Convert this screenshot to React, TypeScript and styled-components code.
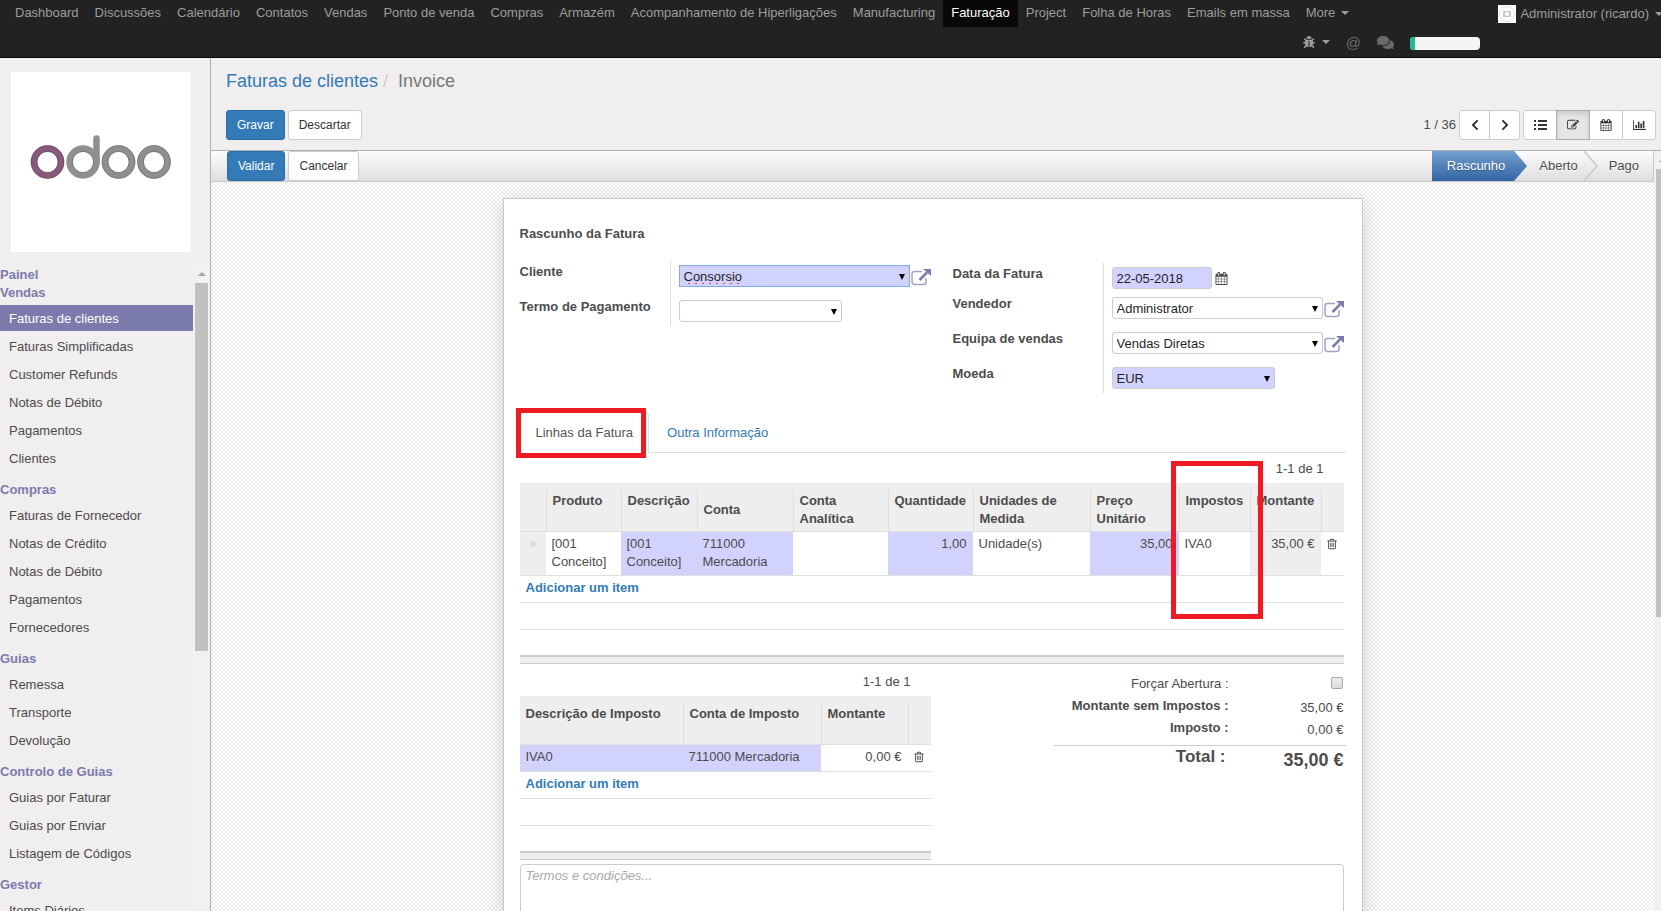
import React from "react";
import styled, { createGlobalStyle, css } from "styled-components";
import { FaBug, FaComments, FaChevronLeft, FaChevronRight } from "react-icons/fa";

const GlobalStyle = createGlobalStyle`
  *, *::before, *::after { box-sizing: border-box; }
  body {
    margin: 0;
    overflow: hidden;
    background: #f0eeee;
    color: #4c4c4c;
    font-family: "Liberation Sans", Arial, sans-serif;
    font-size: 13px;
    line-height: 18px;
  }
  a { text-decoration: none; }
  button, input, select, textarea { font-family: inherit; margin: 0; }
`;

/* ---------- icons ---------- */

const TRASH =
  "M704 736v576q0 14-9 23t-23 9h-64q-14 0-23-9t-9-23v-576q0-14 9-23t23-9h64q14 0 23 9t9 23zm256 0v576q0 14-9 23t-23 9h-64q-14 0-23-9t-9-23v-576q0-14 9-23t23-9h64q14 0 23 9t9 23zm256 0v576q0 14-9 23t-23 9h-64q-14 0-23-9t-9-23v-576q0-14 9-23t23-9h64q14 0 23 9t9 23zm128 724v-948h-896v948q0 22 7 40.5t14.5 27 10.5 8.5h832q3 0 10.5-8.5t14.5-27 7-40.5zm-672-1076h448l-48-117q-7-9-17-11h-317q-10 2-17 11zm928 32v64q0 14-9 23t-23 9h-96v948q0 83-47 143.5t-113 60.5h-832q-66 0-113-58.5t-47-141.5v-952h-96q-14 0-23-9t-9-23v-64q0-14 9-23t23-9h309l70-167q15-37 54-63t79-26h320q40 0 79 26t54 63l70 167h309q14 0 23 9t9 23z";
const CALENDAR =
  "M192 1664h288v-288h-288v288zm352 0h320v-288h-320v288zm-352-352h288v-320h-288v320zm352 0h320v-320h-320v320zm-352-384h288v-288h-288v288zm736 736h320v-288h-320v288zm-384-736h320v-288h-320v288zm768 736h288v-288h-288v288zm-384-352h320v-320h-320v320zm-352-864v-288q0-13-9.5-22.5t-22.5-9.5h-64q-13 0-22.5 9.5t-9.5 22.5v288q0 13 9.5 22.5t22.5 9.5h64q13 0 22.5-9.5t9.5-22.5zm736 864h288v-320h-288v320zm-384-384h320v-288h-320v288zm384 0h288v-288h-288v288zm32-480v-288q0-13-9.5-22.5t-22.5-9.5h-64q-13 0-22.5 9.5t-9.5 22.5v288q0 13 9.5 22.5t22.5 9.5h64q13 0 22.5-9.5t9.5-22.5zm384-64v1280q0 52-38 90t-90 38h-1408q-52 0-90-38t-38-90v-1280q0-52 38-90t90-38h128v-96q0-66 47-113t113-47h64q66 0 113 47t47 113v96h384v-96q0-66 47-113t113-47h64q66 0 113 47t47 113v96h128q52 0 90 38t38 90z";
const EDIT =
  "M888 1184l116-116-152-152-116 116v56h96v96h56zm440-720q-16-16-33 1l-350 350q-17 17-1 33t33-1l350-350q17-17 1-33zm80 594v190q0 119-84.5 203.5t-203.5 84.5h-832q-119 0-203.5-84.5t-84.5-203.5v-832q0-119 84.5-203.5t203.5-84.5h832q63 0 117 25 15 7 18 23 3 17-9 29l-49 49q-14 14-32 8-23-6-45-6h-832q-66 0-113 47t-47 113v832q0 66 47 113t113 47h832q66 0 113-47t47-113v-126q0-13 9-22l64-64q15-15 35-7t20 29zm-96-738l288 288-672 672h-288v-288zm444 132l-92 92-288-288 92-92q28-28 68-28t68 28l152 152q28 28 28 68t-28 68z";
const CHART =
  "M640 896v512h-256v-512h256zm384-512v1024h-256v-1024h256zm1024 1152v128h-2048v-1536h128v1408h1920zm-640-896v768h-256v-768h256zm384-384v1152h-256v-1152h256z";

const Glyph = ({ d, size, wide }: { d: string; size: number; wide?: boolean }) => (
  <svg
    width={wide ? size + 1 : size}
    height={size}
    viewBox={wide ? "0 0 2048 1792" : "0 0 1792 1792"}
    fill="currentColor"
    aria-hidden="true"
  >
    <path d={d} />
  </svg>
);

const ListIcon = () => (
  <svg width="13" height="12" viewBox="0 0 13 12" fill="currentColor" aria-hidden="true">
    <path d="M0 1h2v2H0zM4 1h9v2H4zM0 5h2v2H0zM4 5h9v2H4zM0 9h2v2H0zM4 9h9v2H4z" />
  </svg>
);

const OpenIcon = () => (
  <svg width="20" height="18" viewBox="0 0 20 18" fill="none" aria-hidden="true">
    <path
      d="M11 3.5H3.5a2.5 2.5 0 0 0-2.5 2.5v8a2.5 2.5 0 0 0 2.5 2.5h9a2.5 2.5 0 0 0 2.5-2.5v-4"
      stroke="#a3a2c6"
      strokeWidth="1.5"
    />
    <path d="M8.500 12L16 4.500" stroke="#7c7bad" strokeWidth="2.500" />
    <path d="M12 1h8v7z" fill="#7c7bad" />
  </svg>
);

const OdooLogo = () => (
  <svg width="180" height="180" viewBox="0 0 180 180" fill="none" role="img" aria-label="odoo">
    <g strokeWidth="6.5">
      <circle cx="36.5" cy="90" r="13.5" stroke="#875a7b" />
      <g stroke="#8f8f8f">
        <circle cx="72" cy="90" r="13.5" />
        <path d="M85.5 90V66.5" strokeLinecap="round" />
        <circle cx="107.5" cy="90" r="13.5" />
        <circle cx="143" cy="90" r="13.5" />
      </g>
    </g>
    <g strokeWidth="1" stroke="#000" opacity=".22">
      <circle cx="36.5" cy="90" r="16.5" />
      <circle cx="36.5" cy="90" r="10.5" />
      <circle cx="72" cy="90" r="10.5" />
      <circle cx="107.5" cy="90" r="16.5" />
      <circle cx="107.5" cy="90" r="10.5" />
      <circle cx="143" cy="90" r="16.5" />
      <circle cx="143" cy="90" r="10.5" />
    </g>
  </svg>
);

const Caret = styled.span`
  display: inline-block;
  border: 4px solid transparent;
  border-top-color: currentColor;
  border-bottom: 0;
`;

/* ---------- top bar ---------- */

const Page = styled.div`
  height: 100vh;
  display: flex;
  flex-direction: column;
`;

const NavBar = styled.header`
  background: #222;
  border-bottom: 1px solid #080808;
  color: #9d9d9d;
`;

const NavRow = styled.div`
  display: flex;
  height: 27px;
  padding-left: 7px;
`;

const NavLink = styled.a<{ $active?: boolean }>`
  display: flex;
  align-items: center;
  gap: 6px;
  padding: 0 8px 2px;
  white-space: nowrap;
  color: ${(p) => (p.$active ? "#fff" : "#9d9d9d")};
  background: ${(p) => (p.$active ? "#080808" : "transparent")};
`;

const UserButton = styled.button`
  display: flex;
  flex: none;
  align-items: center;
  gap: 4px;
  margin-left: auto;
  padding: 0;
  border: 0;
  background: none;
  color: #9d9d9d;
  font-size: 13px;
  white-space: nowrap;
  ${Caret} { margin: 0 -2px 0 2px; }
`;

const Tray = styled.div`
  display: flex;
  align-items: center;
  justify-content: flex-end;
  height: 30px;
  padding-right: 181px;
`;

const TrayButton = styled.button<{ $dim?: boolean }>`
  display: flex;
  align-items: center;
  gap: 7px;
  height: 20px;
  margin-right: 16px;
  padding: 0;
  border: 0;
  background: none;
  color: ${(p) => (p.$dim ? "#6a6a6a" : "#9d9d9d")};
  font-size: 15px;
`;

const Planner = styled.div`
  width: 70px;
  height: 13px;
  margin-top: 3px;
  overflow: hidden;
  border-radius: 4px;
  background: #f5f5f5;
`;

const PlannerBar = styled.div`
  width: 5px;
  height: 100%;
  background: #21b799;
`;

/* ---------- left menu ---------- */

const Body = styled.div`
  flex: 1;
  min-height: 0;
  display: flex;
`;

const Side = styled.aside`
  flex: none;
  width: 211px;
  display: flex;
  flex-direction: column;
  border-right: 1px solid #afafb6;
`;

const LogoLink = styled.a`
  flex: none;
  width: 180px;
  height: 180px;
  margin: 14px 0 13px 11px;
  background: #fff;
`;

const MenuArea = styled.div`
  flex: 1;
  min-height: 0;
  display: flex;
`;

const Menu = styled.nav`
  flex: 1;
  overflow: hidden;
`;

const MenuTitle = styled.h2`
  margin: 0;
  padding-top: 2px;
  color: #7c7bad;
  font-size: 13px;
  line-height: 16px;
`;

const MenuList = styled.ul`
  display: flex;
  flex-direction: column;
  gap: 2px;
  margin: 0;
  padding: 4px 0 9px;
  list-style: none;
`;

const MenuItem = styled.a<{ $active?: boolean }>`
  display: block;
  padding: 5px 9px 3px;
  color: ${(p) => (p.$active ? "#fff" : "#4c4c4c")};
  background: ${(p) => (p.$active ? "#7c7bad" : "transparent")};
`;

const ScrollTrack = styled.div<{ $narrow?: boolean }>`
  flex: none;
  display: flex;
  flex-direction: column;
  width: ${(p) => (p.$narrow ? 7 : 17)}px;
  overflow: hidden;
  background: #f1f1f1;
`;

const ScrollArrow = styled.div`
  display: flex;
  align-items: center;
  height: 18px;
  padding-left: 5px;
  color: #a3a3a3;
  ${Caret} { transform: rotate(180deg); }
`;

const ScrollThumb = styled.div<{ $share: number }>`
  height: ${(p) => p.$share}%;
  margin: 0 2px;
  background: #c1c1c1;
  width: 13px;
`;

/* ---------- control panel ---------- */

const Main = styled.main`
  flex: 1;
  min-width: 0;
  display: flex;
  flex-direction: column;
`;

const ControlPanel = styled.div`
  height: 93px;
  padding: 14px 5px 0 15px;
  border-bottom: 1px solid #afafb6;
`;

const Breadcrumb = styled.nav`
  display: flex;
  gap: 5px;
  height: 38px;
  font-size: 18px;
  color: #777;
  a { color: #337ab7; }
  i { color: #ccc; font-style: normal; padding-right: 5px; }
`;

const ControlRow = styled.div`
  display: flex;
  align-items: center;
  gap: 3px;
`;

const Button = styled.button<{ $primary?: boolean }>`
  height: 30px;
  padding: 0 10px;
  border: 1px solid ${(p) => (p.$primary ? "#2e6da4" : "#ccc")};
  border-radius: 3px;
  background: ${(p) => (p.$primary ? "#337ab7" : "#fff")};
  color: ${(p) => (p.$primary ? "#fff" : "#333")};
  font-size: 12px;
`;

const PagerText = styled.span`
  margin-left: auto;
`;

const ButtonGroup = styled.div`
  display: flex;
  button + button { margin-left: -1px; }
  button:not(:first-child) { border-top-left-radius: 0; border-bottom-left-radius: 0; }
  button:not(:last-child) { border-top-right-radius: 0; border-bottom-right-radius: 0; }
`;

const IconButton = styled.button<{ $w: number; $pressed?: boolean }>`
  display: flex;
  align-items: center;
  justify-content: center;
  width: ${(p) => p.$w}px;
  height: 30px;
  padding: 0;
  border: 1px solid #ccc;
  border-radius: 3px;
  background: #fff;
  color: #333;
  ${(p) =>
    p.$pressed &&
    css`
      z-index: 1;
      border-color: #adadad;
      background: #e6e6e6;
      box-shadow: inset 0 3px 5px rgba(0, 0, 0, 0.125);
    `}
`;

const ScrollRegion = styled.div`
  flex: 1;
  min-height: 0;
  display: flex;
`;

const FormView = styled.div`
  flex: 1;
  min-width: 0;
  overflow: hidden;
  background-color: #fff;
  background-image: conic-gradient(#ededed 25%, transparent 0 50%, #ededed 0 75%, transparent 0);
  background-size: 4px 4px;
`;

const StatusBar = styled.div`
  display: flex;
  align-items: center;
  gap: 3px;
  height: 31px;
  padding-left: 16px;
  border-bottom: 1px solid #cacaca;
  background: linear-gradient(#fcfcfc, #dedede);
`;

const Steps = styled.ol`
  display: flex;
  height: 30px;
  margin: 0 0 0 auto;
  padding: 0;
  list-style: none;
  border-right: 1px solid #cacaca;
`;

const Step = styled.li<{ $on?: boolean }>`
  display: flex;
  align-items: center;
  padding: 0 ${(p) => (p.$on ? 9 : 6)}px 0 ${(p) => (p.$on ? 15 : 11)}px;
  color: ${(p) => (p.$on ? "#fff" : "#4c4c4c")};
  background: ${(p) => (p.$on ? "linear-gradient(#729fcf, #3465a4)" : "none")};
  text-shadow: ${(p) => (p.$on ? "0 1px 1px rgba(0, 0, 0, 0.3)" : "0 1px 1px #fff")};
  &:last-child { padding-right: 14px; }
`;

/* ---------- sheet ---------- */

const Sheet = styled.section`
  max-width: 860px;
  min-height: 100vh;
  margin: 16px auto 0;
  padding: 26px 16px 16px;
  border: 1px solid #c8c8d3;
  background: #fff;
  box-shadow: 0 4px 20px rgba(0, 0, 0, 0.15);
`;

const SheetTitle = styled.h1`
  margin: 0 0 18px;
  font-size: 13px;
  line-height: 18px;
`;

const Fields = styled.div`
  display: grid;
  grid-template-columns: 433px 1fr;
  align-items: start;
  height: 150px;
`;

const FieldGroup = styled.div<{ $shift?: boolean }>`
  margin-top: ${(p) => (p.$shift ? 2 : 0)}px;
`;

const FieldRow = styled.div<{ $tall?: boolean }>`
  display: grid;
  grid-template-columns: 150px 1fr;
  height: ${(p) => (p.$tall ? 35 : 30)}px;
  label { padding-top: 2px; font-weight: bold; }
`;

const FieldCell = styled.div`
  display: flex;
  align-items: flex-start;
  gap: 1px;
  padding: 4px 0 0 8px;
  border-left: 1px solid #ddd;
`;

const Box = styled.div<{ $w: number }>`
  position: relative;
  width: ${(p) => p.$w}px;
`;

const control = css<{ $required?: boolean }>`
  display: block;
  width: 100%;
  height: 22px;
  padding: 0 4px;
  border: 1px solid #ccc;
  border-radius: 3px;
  outline: 0;
  background: ${(p) => (p.$required ? "#d2d2ff" : "#fff")};
  color: #1f1f1f;
  font-size: 13px;
`;

const Input = styled.input<{ $required?: boolean; $focus?: boolean }>`
  ${control}
  ${(p) =>
    p.$focus &&
    css`
      border-color: #84a9e8;
      border-radius: 0;
      text-decoration: underline wavy #f22 1px;
      text-decoration-skip-ink: none;
    `}
`;

const Select = styled.select<{ $required?: boolean }>`
  ${control}
  appearance: none;
`;

const Drop = styled.svg`
  position: absolute;
  top: 9px;
  right: 5px;
  pointer-events: none;
`;

const IconAction = styled.button`
  display: flex;
  align-items: center;
  height: 24px;
  padding: 0;
  border: 0;
  background: none;
  color: #4c4c4c;
`;

const DateAction = styled(IconAction)`
  height: 22px;
  padding-left: 2px;
`;

/* ---------- tabs and tables ---------- */

const Tabs = styled.div`
  display: flex;
  align-items: flex-end;
  gap: 2px;
  height: 42px;
  border-bottom: 1px solid #ddd;
`;

const Tab = styled.button<{ $active?: boolean }>`
  position: relative;
  height: 41px;
  margin-bottom: -1px;
  padding: 0 15px;
  border: 1px solid transparent;
  border-color: ${(p) => (p.$active ? "#ddd #ddd #fff" : "transparent")};
  border-radius: 4px 4px 0 0;
  background: ${(p) => (p.$active ? "#fff" : "none")};
  color: ${(p) => (p.$active ? "#555" : "#337ab7")};
  font-size: 13px;
`;

const TabMark = styled.span`
  position: absolute;
  inset: -5px 2px -6px -5px;
  border: 5px solid #ed1c24;
`;

const ColumnMark = styled.span`
  position: absolute;
  z-index: 1;
  top: -22px;
  left: -8px;
  width: 92px;
  height: 158px;
  border: 5px solid #ed1c24;
`;

const Pager = styled.div`
  padding: 7px 20px 5px 0;
  text-align: right;
`;

const TableWrap = styled.div`
  margin-right: 2px;
`;

const Table = styled.table`
  width: 100%;
  table-layout: fixed;
  border-collapse: separate;
  border-spacing: 0;
  tr { height: 27px; }
`;

const Th = styled.th`
  position: relative;
  padding: 6px 0 0;
  border-bottom: 1px solid #dfdfdf;
  background: #eee;
  text-align: left;
`;

const HeadText = styled.div<{ $rule?: boolean; $middle?: boolean }>`
  display: flex;
  align-items: ${(p) => (p.$middle ? "center" : "flex-start")};
  height: 42px;
  padding: 3px 0 3px 6px;
  border-left: ${(p) => (p.$rule ? "1px solid #dfdfdf" : "0")};
`;

const Td = styled.td<{ $tone?: "req" | "ro"; $right?: boolean }>`
  padding: 3px 6px 4px;
  border-bottom: 1px solid #dfdfdf;
  vertical-align: top;
  text-align: ${(p) => (p.$right ? "right" : "left")};
  background: ${(p) => (p.$tone === "req" ? "#d2d2ff" : p.$tone === "ro" ? "#eee" : "#fff")};
`;

const IconTd = styled(Td)`
  padding: 3px 5px 4px;
`;

const Dot = styled.span`
  display: block;
  width: 6px;
  height: 6px;
  margin: 6px auto 0 4px;
  border-radius: 50%;
  background: #ddd;
`;

const RowIcon = styled(IconAction)`
  height: 18px;
`;

const AddLink = styled.a`
  color: #337ab7;
  font-weight: bold;
`;

const TableFoot = styled.div`
  height: 34px;
  padding-top: 25px;
  &::after {
    content: "";
    display: block;
    height: 9px;
    border-top: 2px solid #ccc;
    border-bottom: 1px solid #ccc;
    background: #eee;
  }
`;

/* ---------- bottom of the sheet ---------- */

const Bottom = styled.div`
  display: grid;
  grid-template-columns: 413px 1fr;
  align-items: start;
  margin-top: 2px;
`;

const Totals = styled.dl`
  display: grid;
  grid-template-columns: 175px 1fr;
  align-items: center;
  margin: 7px 0 0 121px;
  text-align: right;
  dt, dd { height: 22px; margin: 0; line-height: 22px; }
  dt { font-weight: bold; }
  dd { padding-right: 2px; }
  dd:nth-of-type(n + 2) { padding-top: 2px; }
`;

const TotalRule = styled.div`
  grid-column: 1 / -1;
  height: 7px;
  border-bottom: 1px solid #ccc;
`;

const TotalLabel = styled.dt`
  && { height: 30px; padding-right: 3px; font-size: 17px; }
`;

const TotalValue = styled.dd`
  && { height: 30px; padding-top: 5px; font-size: 18px; font-weight: bold; line-height: 24px; }
`;

const PlainLabel = styled.label`
  font-weight: normal;
`;

const Check = styled.input`
  appearance: none;
  display: block;
  width: 12px;
  height: 12px;
  margin: 4px 1px 0 auto;
  border: 1px solid #a6a6a6;
  border-radius: 2px;
  background: linear-gradient(#ececec, #dcdcdc);
`;

const Notes = styled.textarea`
  display: block;
  width: calc(100% - 2px);
  height: 100px;
  margin-top: 4px;
  padding: 2px 5px;
  border: 1px solid #ccc;
  border-radius: 4px;
  resize: none;
  font-size: 13px;
  line-height: 18px;
  &::placeholder { color: #a9a9a9; font-style: italic; }
`;

const APPS = [
  "Dashboard", "Discussões", "Calendário", "Contatos", "Vendas", "Ponto de venda", "Compras", "Armazém",
  "Acompanhamento de Hiperligações", "Manufacturing", "Faturação", "Project", "Folha de Horas", "Emails em massa",
];

const MENUS: { title: string; items: string[] }[] = [
  {
    title: "Vendas",
    items: ["Faturas de clientes", "Faturas Simplificadas", "Customer Refunds", "Notas de Débito", "Pagamentos", "Clientes"],
  },
  { title: "Compras", items: ["Faturas de Fornecedor", "Notas de Crédito", "Notas de Débito", "Pagamentos", "Fornecedores"] },
  { title: "Guias", items: ["Remessa", "Transporte", "Devolução"] },
  { title: "Controlo de Guias", items: ["Guias por Faturar", "Guias por Enviar", "Listagem de Códigos"] },
  { title: "Gestor", items: ["Items Diários"] },
];

const Arrow = () => (
  <Drop width="6" height="6" viewBox="0 0 6 6" aria-hidden="true">
    <path d="M0 0h6L3 6z" fill="#000" />
  </Drop>
);

const Chevron = ({ on }: { on?: boolean }) => (
  <svg width="14" height="30" viewBox="0 0 14 30" aria-hidden="true">
    <defs>
      <linearGradient id="stepFill" x1="0" y1="0" x2="0" y2="1">
        <stop offset="0" stopColor="#729fcf" />
        <stop offset="1" stopColor="#3465a4" />
      </linearGradient>
    </defs>
    {on ? (
      <path d="M0 0l13 15L0 30z" fill="url(#stepFill)" />
    ) : (
      <path d="M0 0l13 15L0 30" fill="none" stroke="#cacaca" strokeWidth="1.5" />
    )}
  </svg>
);

type DropFieldProps = { id: string; label: string; value: string; width: number; tall?: boolean; required?: boolean; open?: boolean };

const DropField = ({ id, label, value, width, tall, required, open }: DropFieldProps) => (
  <FieldRow $tall={tall}>
    <label htmlFor={id}>{label}</label>
    <FieldCell>
      <Box $w={width}>
        <Select id={id} $required={required} defaultValue={value}>
          <option>{value}</option>
        </Select>
        <Arrow />
      </Box>
      {open && (
        <IconAction aria-label={"Abrir " + label}>
          <OpenIcon />
        </IconAction>
      )}
    </FieldCell>
  </FieldRow>
);

const Cols = ({ widths }: { widths: number[] }) => (
  <colgroup>
    {widths.map((w, i) => (
      <col key={i} width={w} />
    ))}
  </colgroup>
);

const FillerRows = ({ span }: { span: number }) => (
  <>
    <tr>
      <Td colSpan={span}>
        <AddLink href="#">Adicionar um item</AddLink>
      </Td>
    </tr>
    <tr>
      <Td colSpan={span} />
    </tr>
  </>
);

const LineTable = () => (
  <TableWrap>
    <Table>
      <Cols widths={[26, 75, 76, 96, 95, 85, 117, 89, 71, 71, 23]} />
      <thead>
        <tr>
          <Th><HeadText /></Th>
          <Th><HeadText $rule>Produto</HeadText></Th>
          <Th><HeadText $rule>Descrição</HeadText></Th>
          <Th><HeadText $rule $middle>Conta</HeadText></Th>
          <Th><HeadText $rule>Conta<br />Analítica</HeadText></Th>
          <Th><HeadText $rule>Quantidade</HeadText></Th>
          <Th><HeadText $rule>Unidades de<br />Medida</HeadText></Th>
          <Th><HeadText $rule>Preço<br />Unitário</HeadText></Th>
          <Th>
            <HeadText $rule>Impostos</HeadText>
            <ColumnMark />
          </Th>
          <Th><HeadText $rule>Montante</HeadText></Th>
          <Th><HeadText $rule /></Th>
        </tr>
      </thead>
      <tbody>
        <tr>
          <Td $tone="ro"><Dot /></Td>
          <Td>[001 Conceito]</Td>
          <Td $tone="req">[001 Conceito]</Td>
          <Td $tone="req">711000 Mercadoria</Td>
          <Td />
          <Td $tone="req" $right>1,00</Td>
          <Td>Unidade(s)</Td>
          <Td $tone="req" $right>35,00</Td>
          <Td>IVA0</Td>
          <Td $tone="ro" $right>35,00 €</Td>
          <IconTd>
            <RowIcon aria-label="Eliminar linha"><Glyph d={TRASH} size={12} /></RowIcon>
          </IconTd>
        </tr>
        <FillerRows span={11} />
      </tbody>
    </Table>
    <TableFoot />
  </TableWrap>
);

const TaxTable = () => (
  <TableWrap>
    <Pager>1-1 de 1</Pager>
    <Table>
      <Cols widths={[163, 138, 87, 23]} />
      <thead>
        <tr>
          <Th><HeadText>Descrição de Imposto</HeadText></Th>
          <Th><HeadText $rule>Conta de Imposto</HeadText></Th>
          <Th><HeadText $rule>Montante</HeadText></Th>
          <Th><HeadText $rule /></Th>
        </tr>
      </thead>
      <tbody>
        <tr>
          <Td $tone="req">IVA0</Td>
          <Td $tone="req">711000 Mercadoria</Td>
          <Td $right>0,00 €</Td>
          <IconTd>
            <RowIcon aria-label="Eliminar imposto"><Glyph d={TRASH} size={12} /></RowIcon>
          </IconTd>
        </tr>
        <FillerRows span={4} />
      </tbody>
    </Table>
    <TableFoot />
  </TableWrap>
);

export default function App() {
  return (
    <Page>
      <GlobalStyle />
      <NavBar>
        <NavRow>
          {APPS.map((name) => (
            <NavLink key={name} href="#" $active={name === "Faturação"}>{name}</NavLink>
          ))}
          <NavLink href="#">More <Caret /></NavLink>
          <UserButton>
            <svg width="18" height="18" viewBox="0 0 18 18" aria-hidden="true">
              <path fill="#fff" d="M0 0h18v18H0z" />
              <circle cx="9" cy="9" r="7.5" fill="none" stroke="#e4e4e4" />
              <rect x="5" y="6" width="8" height="6" fill="#c8c8c8" />
              <circle cx="9" cy="9" r="2" fill="#fff" />
            </svg>
            Administrator (ricardo)
            <Caret />
          </UserButton>
        </NavRow>
        <Tray>
          <TrayButton aria-label="Depuração"><FaBug size={12} /><Caret /></TrayButton>
          <TrayButton $dim>@</TrayButton>
          <TrayButton $dim aria-label="Conversas"><FaComments size={17} /></TrayButton>
          <Planner><PlannerBar /></Planner>
        </Tray>
      </NavBar>

      <Body>
        <Side>
          <LogoLink href="#"><OdooLogo /></LogoLink>
          <MenuArea>
            <Menu>
              <MenuTitle>Painel</MenuTitle>
              {MENUS.map((group) => (
                <React.Fragment key={group.title}>
                  <MenuTitle>{group.title}</MenuTitle>
                  <MenuList>
                    {group.items.map((item) => (
                      <li key={item}>
                        <MenuItem href="#" $active={item === "Faturas de clientes"}>{item}</MenuItem>
                      </li>
                    ))}
                  </MenuList>
                </React.Fragment>
              ))}
            </Menu>
            <ScrollTrack>
              <ScrollArrow><Caret /></ScrollArrow>
              <ScrollThumb $share={57} />
            </ScrollTrack>
          </MenuArea>
        </Side>

        <Main>
          <ControlPanel>
            <Breadcrumb>
              <a href="#">Faturas de clientes</a>
              <i>/</i>
              <span>Invoice</span>
            </Breadcrumb>
            <ControlRow>
              <Button $primary>Gravar</Button>
              <Button>Descartar</Button>
              <PagerText>1 / 36</PagerText>
              <ButtonGroup>
                <IconButton $w={31} aria-label="Anterior"><FaChevronLeft size={12} /></IconButton>
                <IconButton $w={31} aria-label="Seguinte"><FaChevronRight size={12} /></IconButton>
              </ButtonGroup>
              <ButtonGroup>
                <IconButton $w={34} aria-label="Lista"><ListIcon /></IconButton>
                <IconButton $w={34} $pressed aria-label="Formulário"><Glyph d={EDIT} size={12} /></IconButton>
                <IconButton $w={34} aria-label="Calendário"><Glyph d={CALENDAR} size={12} /></IconButton>
                <IconButton $w={34} aria-label="Gráfico"><Glyph d={CHART} size={12} wide /></IconButton>
              </ButtonGroup>
            </ControlRow>
          </ControlPanel>

          <ScrollRegion>
            <FormView>
              <StatusBar>
                <Button $primary>Validar</Button>
                <Button>Cancelar</Button>
                <Steps>
                  <Step $on>Rascunho</Step>
                  <Chevron on />
                  <Step>Aberto</Step>
                  <Chevron />
                  <Step>Pago</Step>
                </Steps>
              </StatusBar>

              <Sheet>
                <SheetTitle>Rascunho da Fatura</SheetTitle>
                <Fields>
                  <FieldGroup>
                    <FieldRow $tall>
                      <label htmlFor="cliente">Cliente</label>
                      <FieldCell>
                        <Box $w={231}>
                          <Input id="cliente" $required $focus defaultValue="Consorsio" />
                          <Arrow />
                        </Box>
                        <IconAction aria-label="Abrir Cliente"><OpenIcon /></IconAction>
                      </FieldCell>
                    </FieldRow>
                    <DropField id="termo" label="Termo de Pagamento" value="" width={163} />
                  </FieldGroup>
                  <FieldGroup $shift>
                    <FieldRow>
                      <label htmlFor="data">Data da Fatura</label>
                      <FieldCell>
                        <Box $w={100}>
                          <Input id="data" $required defaultValue="22-05-2018" />
                        </Box>
                        <DateAction aria-label="Escolher data"><Glyph d={CALENDAR} size={13} /></DateAction>
                      </FieldCell>
                    </FieldRow>
                    <DropField id="vendedor" label="Vendedor" value="Administrator" width={211} tall open />
                    <DropField id="equipa" label="Equipa de vendas" value="Vendas Diretas" width={211} tall open />
                    <DropField id="moeda" label="Moeda" value="EUR" width={163} required />
                  </FieldGroup>
                </Fields>

                <Tabs>
                  <Tab $active>Linhas da Fatura<TabMark /></Tab>
                  <Tab>Outra Informação</Tab>
                </Tabs>
                <TableWrap><Pager>1-1 de 1</Pager></TableWrap>
                <LineTable />

                <Bottom>
                  <TaxTable />
                  <Totals>
                    <dt><PlainLabel htmlFor="forcar">Forçar Abertura :</PlainLabel></dt>
                    <dd><Check id="forcar" type="checkbox" /></dd>
                    <dt>Montante sem Impostos :</dt>
                    <dd>35,00 €</dd>
                    <dt>Imposto :</dt>
                    <dd>0,00 €</dd>
                    <TotalRule />
                    <TotalLabel>Total :</TotalLabel>
                    <TotalValue>35,00 €</TotalValue>
                  </Totals>
                </Bottom>
                <Notes aria-label="Termos e condições" placeholder="Termos e condições..." />
              </Sheet>
            </FormView>
            <ScrollTrack $narrow>
              <ScrollArrow><Caret /></ScrollArrow>
              <ScrollThumb $share={59} />
            </ScrollTrack>
          </ScrollRegion>
        </Main>
      </Body>
    </Page>
  );
}
